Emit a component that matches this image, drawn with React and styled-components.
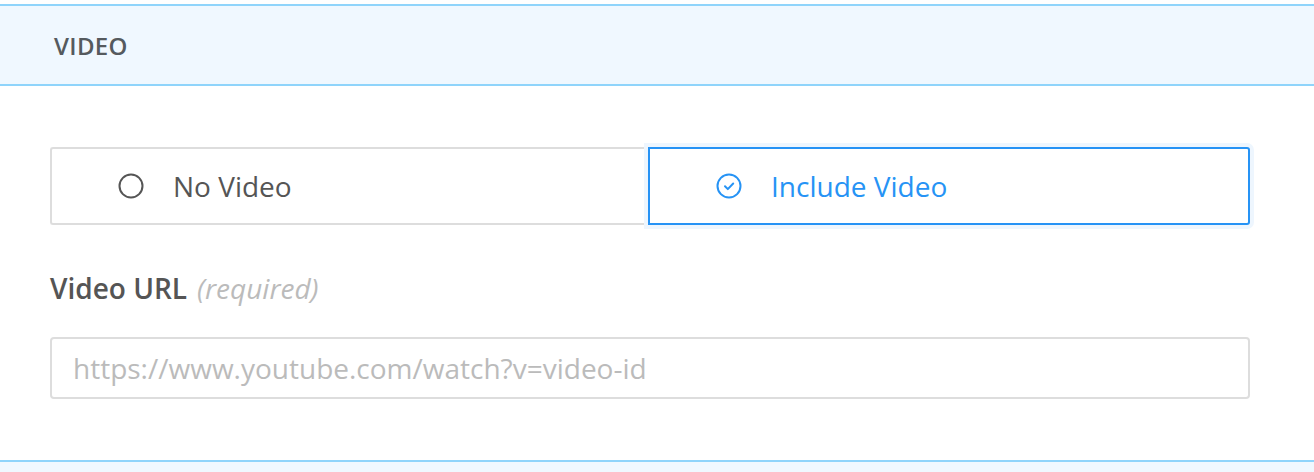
import React, { useState } from 'react';
import styled, { createGlobalStyle } from 'styled-components';

const GlobalStyle = createGlobalStyle`
  body {
    margin: 0;
    padding: 0;
    background: #ffffff;
    font-family: 'Open Sans', 'Liberation Sans', sans-serif;
  }
`;

const Page = styled.div`
  padding-top: 4px;
`;

const SectionHeader = styled.div`
  height: 78px;
  display: flex;
  align-items: center;
  padding: 0 54px;
  background: #f0f8ff;
  border-top: 2px solid #8fd4fb;
  border-bottom: 2px solid #8fd4fb;
  color: #555a5e;
  font-size: 24px;
  font-weight: 600;
  letter-spacing: 0.3px;
  text-transform: uppercase;
`;

const Body = styled.div`
  padding: 61px 64px 61px 50px;
  display: flex;
  flex-direction: column;
`;

const Toggle = styled.div`
  display: grid;
  grid-template-columns: 598fr 602fr;
`;

const Option = styled.button`
  height: 78px;
  display: flex;
  align-items: center;
  gap: 29px;
  padding: 0 0 0 66px;
  background: #ffffff;
  font-family: inherit;
  font-size: 28px;
  cursor: pointer;
  border: 2px solid ${(p) => (p.$active ? '#2693f5' : '#dddddd')};
  border-radius: ${(p) => (p.$first ? '3px 0 0 3px' : '0 3px 3px 0')};
  color: ${(p) => (p.$active ? '#2693f5' : '#555555')};
  box-shadow: ${(p) => (p.$active ? '0 0 0 4px #eef6fe' : 'none')};
  position: relative;
  z-index: ${(p) => (p.$active ? 1 : 0)};
  ${(p) => (p.$first ? 'border-right: none;' : '')}
`;

const Label = styled.div`
  margin-top: 44px;
  font-size: 28px;
  line-height: 38px;
  font-weight: 600;
  color: #555555;

  em {
    font-weight: 400;
    color: #bbbbbb;
    margin-left: 10px;
  }
`;

const Input = styled.input`
  margin-top: 30px;
  height: 62px;
  box-sizing: border-box;
  border: 2px solid #dddddd;
  border-radius: 4px;
  padding: 0 21px;
  font-family: inherit;
  font-size: 28px;
  color: #555555;
  outline: none;

  &::placeholder {
    color: #bbbbbb;
  }
`;

const NextSection = styled.div`
  height: 12px;
  background: #f0f8ff;
  border-top: 2px solid #8fd4fb;
`;

const RadioIcon = ({ checked }) => (
  <svg width="26" height="26" viewBox="0 0 26 26" fill="none">
    <circle cx="13" cy="13" r="11.5" stroke="currentColor" strokeWidth="2" />
    {checked && (
      <path d="M9 13.3l2.8 2.8 5.4-5.6" stroke="currentColor" strokeWidth="2" strokeLinecap="round" strokeLinejoin="round" />
    )}
  </svg>
);

const App = () => {
  const [withVideo, setWithVideo] = useState(true);
  const [url, setUrl] = useState('');

  return (
    <Page>
      <GlobalStyle />
      <SectionHeader>Video</SectionHeader>
      <Body>
        <Toggle>
          <Option $first $active={!withVideo} onClick={() => setWithVideo(false)}>
            <RadioIcon checked={!withVideo} />
            No Video
          </Option>
          <Option $active={withVideo} onClick={() => setWithVideo(true)}>
            <RadioIcon checked={withVideo} />
            Include Video
          </Option>
        </Toggle>
        <Label>
          Video URL<em>(required)</em>
        </Label>
        <Input
          type="text"
          value={url}
          onChange={(e) => setUrl(e.target.value)}
          placeholder="https://www.youtube.com/watch?v=video-id"
        />
      </Body>
      <NextSection />
    </Page>
  );
};

export default App;
